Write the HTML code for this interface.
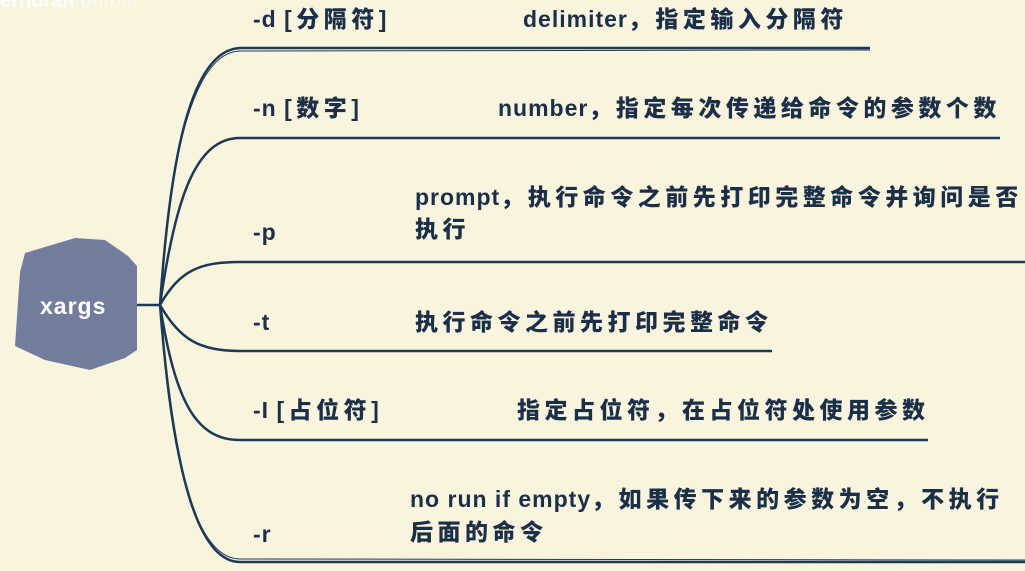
<!DOCTYPE html>
<html><head><meta charset="utf-8"><style>
body{margin:0;width:1025px;height:571px;overflow:hidden;background:#f8f4de;position:relative;font-family:"Liberation Sans","Noto Sans CJK SC",sans-serif;}
.t{position:absolute;font-weight:bold;font-size:23px;color:#1b3048;letter-spacing:1px;white-space:nowrap;line-height:32px;}
.t b{letter-spacing:4.5px;}
.wm{position:absolute;left:0;top:-10px;color:#fff;font-weight:bold;font-size:20px;opacity:.9}
</style></head><body>
<svg width="1025" height="571" style="position:absolute;left:0;top:0">
<polygon points="25,253 75,238 105,240 128,256 137,266 137,350 125,358 90,370 45,360 15,346 20,272" fill="#737e9e"/>
<g stroke="#1c3a55" stroke-width="2.5" fill="none">
<line x1="137" y1="305" x2="160" y2="305"/>
<path d="M160,305 C170,160 190,50 240,48 L870,48"/>
<path d="M160,305 C175,200 195,138 240,138 L1000,138"/>
<path d="M160,305 C180,270 200,262 240,262 L1025,262"/>
<path d="M160,305 C180,340 200,351 240,351 L772,351"/>
<path d="M160,305 C175,400 195,440 240,440 L928,440"/>
<path d="M160,305 C172,460 195,562 240,562 L1025,562"/>
</g>
<g stroke="#1c3a55" stroke-width="1" fill="none">
<path d="M160,305 C168,165 192,52 240,51 L870,50"/>
<path d="M160,305 C170,465 197,559 240,559 L1025,560"/>
</g>
</svg>
<div class="wm">erhuran <span style="opacity:.5">bilibili</span></div>
<div class="t" style="left:40px;top:290px;color:#fff;">xargs</div>
<div class="t" style="left:253px;top:3px">-d <b>[分隔符]</b></div>
<div class="t" style="left:523px;top:3px">delimiter<b>，指定输入分隔符</b></div>
<div class="t" style="left:253px;top:92px">-n <b>[数字]</b></div>
<div class="t" style="left:498px;top:92px">number<b>，指定每次传递给命令的参数个数</b></div>
<div class="t" style="left:253px;top:216px">-p</div>
<div class="t" style="left:415px;top:181px">prompt<b>，执行命令之前先打印完整命令并询问是否</b></div>
<div class="t" style="left:415px;top:213px"><b>执行</b></div>
<div class="t" style="left:253px;top:306px">-t</div>
<div class="t" style="left:415px;top:306px"><b>执行命令之前先打印完整命令</b></div>
<div class="t" style="left:253px;top:394px">-I <b>[占位符]</b></div>
<div class="t" style="left:517px;top:394px"><b>指定占位符，在占位符处使用参数</b></div>
<div class="t" style="left:253px;top:518px">-r</div>
<div class="t" style="left:410px;top:483px">no run if empty<b>，如果传下来的参数为空，不执行</b></div>
<div class="t" style="left:410px;top:516px"><b>后面的命令</b></div>
</body></html>
